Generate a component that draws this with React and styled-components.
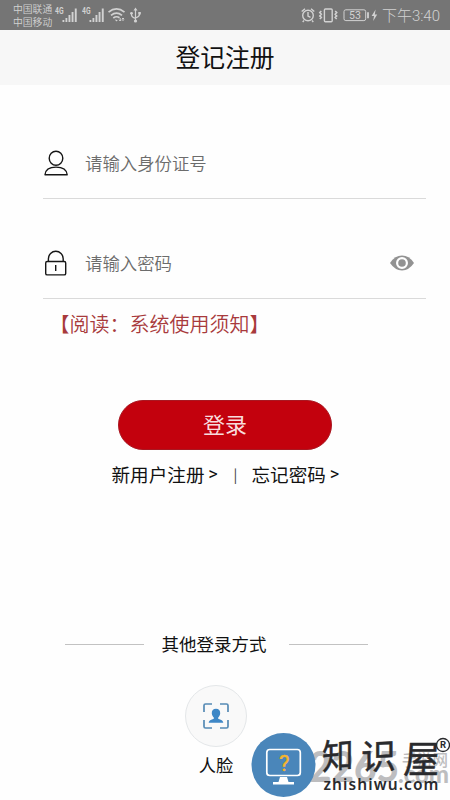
import React from "react"
import styled, { createGlobalStyle } from "styled-components"

const GlobalStyle = createGlobalStyle`
* {
box-sizing: border-box;
}
body {
margin: 0;
background: #fff;
font-family: "Noto Sans CJK SC", sans-serif;
}
`

const Page = styled.div`
position: relative;
display: flex;
flex-direction: column;
width: 450px;
height: 800px;
overflow: hidden;
background: #fefefe;
color: #111;
`

const StatusBar = styled.div`
display: flex;
align-items: center;
justify-content: space-between;
height: 30px;
padding: 0 10px 0 13px;
background: #757575;
color: #d2d2d2;
`

const StatusGroup = styled.div`
display: flex;
align-items: center;
height: 30px;
`

const Carriers = styled.div`
width: 41px;
margin-top: 2px;
font-size: 9.8px;
font-weight: 350;
line-height: 13.5px;
white-space: nowrap;
`

const Clock = styled.span`
margin-left: 4px;
padding-top: 1px;
font-family: Roboto, "Noto Sans CJK SC", sans-serif;
font-size: 15px;
font-weight: 300;
line-height: 30px;
white-space: nowrap;
`

const Header = styled.header`
height: 55px;
background: #f7f7f7;
font-size: 24.8px;
line-height: 52px;
text-align: center;
`

const Form = styled.main`
display: flex;
flex-direction: column;
padding: 43px 24px 0 43px;
`

const Field = styled.label`
display: flex;
align-items: center;
height: ${props => props.$height}px;
padding: ${props => props.$top}px 12px 0 1px;
border-bottom: 1px solid #dadada;
`

const Input = styled.input`
flex: 1;
min-width: 0;
height: 30px;
margin: -2px 0 0 16px;
padding: 0;
border: 0;
outline: 0;
background: none;
font-family: inherit;
font-size: 17.4px;
font-weight: 350;

&::placeholder {
color: #6c6c6c;
opacity: 1;
}
`

const Notice = styled.a`
margin-left: 6.5px;
color: #a83a3c;
font-size: 20px;
font-weight: 350;
line-height: 50px;
white-space: nowrap;
`

const LoginButton = styled.button`
width: 214px;
height: 50px;
margin: 51px 0 0 118px;
padding: 0 0 4px;
border: 1px solid #a91822;
border-radius: 25px;
background: #c3010d;
color: #f8dcdd;
font-family: inherit;
font-size: 22px;
line-height: 44px;
`

const Links = styled.div`
display: flex;
align-items: center;
height: 48px;
margin-bottom: 2px;
padding-left: 111.5px;
font-size: 18.6px;
line-height: 48px;
white-space: nowrap;
`

const Arrow = styled.span`
width: 15px;
padding-left: 2px;
font-family: Roboto, sans-serif;
font-size: 18px;
text-align: center;
`

const Divider = styled.span`
width: 32px;
color: #333;
font-family: "Noto Sans CJK SC", sans-serif;
font-size: 14px;
text-align: center;
`

const Other = styled.div`
display: flex;
align-items: center;
height: 30px;
margin: 129px 82px 0 65px;
font-size: 17.5px;
line-height: 28px;

&::before,
&::after {
content: "";
width: 79px;
height: 1px;
background: #c2c2c2;
}
&::before {
margin-right: 17.5px;
}
&::after {
margin-left: auto;
}
`

const Face = styled.div`
display: flex;
flex-direction: column;
align-items: center;
width: 62px;
margin: 26px 0 0 185px;
font-size: 17.3px;
line-height: 35px;
`

const FaceCircle = styled.div`
display: flex;
align-items: center;
justify-content: center;
width: 62px;
height: 62px;
border: 1px solid #e4e7e9;
border-radius: 50%;
background: #f9f9f9;
`

/* site marks floating over the bottom corner */
const Watermark = styled.div`
position: absolute;
left: 250px;
top: 730px;
width: 200px;
height: 70px;
`

const Mark = styled.svg`
display: block;
overflow: visible;
`

const Svg = styled.svg`
flex: none;
display: block;
`

const Signal = () => (
<Svg width="27" height="22" viewBox="0 0 27 22" fill="#d2d2d2">
    <text x="1" y="10" fontSize="8.5" fontWeight="700" fontFamily="Roboto" textLength="8.5" lengthAdjust="spacingAndGlyphs">4G</text>
    <path d="M8.5 16h1.8v2H8.5zM11.5 14h1.8v4h-1.8zM14.5 11h1.9v7h-1.9zM17.6 8h1.9v10h-1.9zM20.8 4.5h1.9V18h-1.9z" />
</Svg>
)

const StatusIcons = () => (
<Svg width="78" height="30" viewBox="300 0 78 30" fill="none" stroke="#d2d2d2" strokeWidth="1.4">
    <circle cx="308" cy="15.5" r="5.3" />
    <path d="M308 12v4l2.5 1.3M301.7 11.5l3.3-2.8M314.3 11.5L311 8.7M304 20.5l-1.3 1.4M312 20.5l1.3 1.4" />
    <rect x="324.4" y="9" width="7.8" height="12.8" rx="1" />
    <path d="M321.3 11l-1.5 1.5 1.5 1.7-1.5 1.7 1.5 1.6-1.5 1.5M335.2 11l1.5 1.5-1.5 1.7 1.5 1.7-1.5 1.6 1.5 1.5" strokeWidth="1.6" />
    <rect x="344" y="9.8" width="21.7" height="10.8" rx="1.8" strokeWidth="1" />
    <path d="M368 12.3v6" strokeWidth="1.8" />
    <path d="M375.6 9.5l-4 6.6h2.4l-.8 5 4-6.7h-2.4z" fill="#d2d2d2" stroke="none" />
    <text x="349" y="19" fontFamily="Roboto" fontSize="10.5" fill="#d2d2d2" stroke="none">53</text>
</Svg>
)

const WifiUsb = () => (
<Svg width="36" height="30" viewBox="108 0 36 30" fill="none" stroke="#d2d2d2">
    <path d="M108.5 12.2q8-6.5 16 0M111 15.3q5.5-4.4 11 0M113.3 18q3.2-2.4 6.2-.2" strokeWidth="1.7" />
    <path d="M114.7 19.5l1.8 2 1.3-1.6z" fill="#d2d2d2" stroke="none" />
    <path d="M120.2 18v3m-1.2-1.2l1.2 1.2 1.2-1.2M123 21v-3m-1.2 1.2L123 18l1.2 1.2" />
    <path d="M135.5 21V9.5M131.5 13v2q0 2 4 3.5M139.5 12v2.5q0 2-4 3.5" strokeWidth="1.2" />
    <path d="M135.5 7.5l2 3h-4zM138.3 12h2.5v2.5h-2.5z" fill="#d2d2d2" stroke="none" />
    <circle cx="131.5" cy="13.3" r="1.4" fill="#d2d2d2" stroke="none" />
    <circle cx="135.5" cy="21" r="1.6" fill="#d2d2d2" stroke="none" />
</Svg>
)

const UserIcon = () => (
<Svg width="25" height="26" viewBox="0 -.5 25 26" fill="none" stroke="#161616" strokeWidth="1.4">
    <ellipse cx="12" cy="7.7" rx="6.8" ry="7" />
    <path d="M1 24.2c.4-5 4.400-7.600 11-7.600s10.700 2.600 11.200 7.600z" strokeLinejoin="round" />
</Svg>
)

const LockIcon = () => (
<Svg width="25" height="26" viewBox="0 -.5 25 26" fill="none" stroke="#161616" strokeWidth="1.4">
    <rect x="1.7" y="11" width="20" height="13.4" rx="1.5" />
    <path d="M4.4 11V8.2a7.4 7.4 0 0 1 14.8 0V11M11.7 14.5v6" />
</Svg>
)

const EyeIcon = () => (
<Svg width="24" height="16" viewBox="0 0 24 16">
    <path d="M0 8Q5 .6 12 .6T24 8q-5 7.4-12 7.4T0 8z" fill="#929292" />
    <circle cx="12" cy="8" r="4.9" fill="#929292" stroke="#fefefe" strokeWidth="2.2" />
</Svg>
)

const FaceIcon = () => (
<Svg width="26" height="26" viewBox="0 0 26 26" fill="none" stroke="#568bb5" strokeWidth="1.7">
    <path d="M1 9V2.5Q1 1 2.5 1H9M17 1h6.5Q25 1 25 2.5V9M25 17v6.5q0 1.5-1.5 1.5H17M9 25H2.5Q1 25 1 23.5V17" />
    <path d="M13 5.8c2.800 0 4.400 2 4.200 4.700-.2 1.900-1 3-2 3.900v1.300c1 1 4.900.8 5.100 4.100H5.700c.2-3.300 4.100-3.100 5.100-4.100v-1.300c-1-.9-1.800-2-2-3.900-.2-2.700 1.400-4.700 4.200-4.700z" fill="#3e87c6" stroke="none" />
</Svg>
)

const SiteMark = () => (
<Mark width="200" height="70" viewBox="250 730 200 70">
    <g fill="#bdbdbf" fontFamily="Lato" fontWeight="900">
        <text x="309" y="782" fontSize="42" textLength="90" lengthAdjust="spacingAndGlyphs">2265</text>
        <text x="398" y="783" fontSize="24" textLength="51" lengthAdjust="spacingAndGlyphs">.com</text>
        <text x="402" y="766" fontSize="15.5" fontFamily="Noto Sans CJK SC" fontWeight="500" textLength="46">手游网</text>
    </g>
    <circle cx="283.5" cy="765" r="32" fill="#4a86ba" />
    <rect x="266.8" y="749.5" width="33.5" height="26" rx="3" fill="none" stroke="#fff" strokeWidth="1.7" />
    <path d="M280 777h7l1.5 5H294v2.5h-21V782h5.5z" fill="#fff" />
    <text x="284.3" y="771" fontFamily="Roboto" fontSize="22" textAnchor="middle" fill="#f4b52d" stroke="#f4b52d" strokeWidth=".4">?</text>
    <g fill="#292a2d">
        <g fontFamily="Noto Sans CJK SC" fontWeight="400" stroke="#292a2d" strokeWidth=".5">
            <text transform="translate(322 770) skewY(-5) scale(.9 1)" fontSize="35">知</text>
            <text transform="translate(361 770) skewY(-3)" fontSize="35">识</text>
            <text transform="translate(403 773) skewX(-4) scale(.94 1)" fontSize="38">屋</text>
        </g>
        <text x="323.5" y="790" fontFamily="Noto Sans" fontSize="15.5" fontWeight="600" textLength="115">zhishiwu.com</text>
    </g>
    <circle cx="443" cy="745" r="6.5" fill="none" stroke="#292a2d" strokeWidth="1.3" />
    <text x="443" y="748.4" fontFamily="Roboto" fontSize="9.5" fontWeight="700" textAnchor="middle" fill="#292a2d">R</text>
</Mark>
)

const App = () => {
return (
<>
    <GlobalStyle />
    <Page>
        <StatusBar>
            <StatusGroup>
                <Carriers>
                    <div>中国联通</div>
                    <div>中国移动</div>
                </Carriers>
                <Signal />
                <Signal />
                <WifiUsb />
            </StatusGroup>
            <StatusGroup>
                <StatusIcons />
                <Clock>下午3:40</Clock>
            </StatusGroup>
        </StatusBar>
        <Header>登记注册</Header>
        <Form>
            <Field $height={71} $top={0}>
                <UserIcon />
                <Input type="text" placeholder="请输入身份证号" />
            </Field>
            <Field $height={100} $top={29}>
                <LockIcon />
                <Input type="password" placeholder="请输入密码" />
                <EyeIcon />
            </Field>
            <Notice>【阅读：系统使用须知】</Notice>
        </Form>
        <LoginButton>登录</LoginButton>
        <Links>
            <span>新用户注册</span>
            <Arrow>&gt;</Arrow>
            <Divider>|</Divider>
            <span>忘记密码</span>
            <Arrow>&gt;</Arrow>
        </Links>
        <Other>其他登录方式</Other>
        <Face>
            <FaceCircle>
                <FaceIcon />
            </FaceCircle>
            人脸
        </Face>
        <Watermark>
            <SiteMark />
        </Watermark>
    </Page>
</>
)
}
export default App
